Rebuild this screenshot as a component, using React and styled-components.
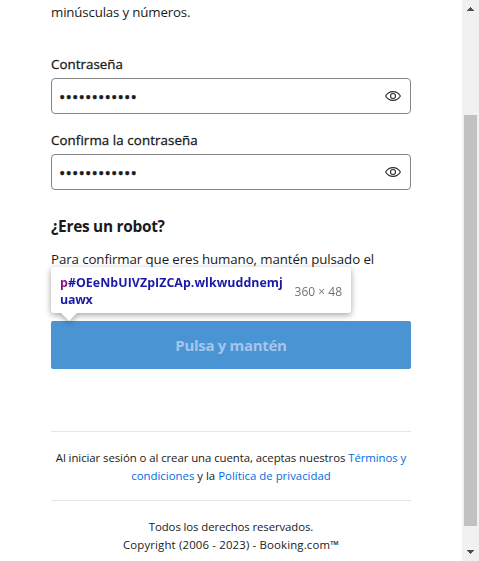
import React from 'react';
import styled, { createGlobalStyle } from 'styled-components';

const GlobalStyle = createGlobalStyle`
  *, *::before, *::after { box-sizing: border-box; }
  body {
    margin: 0;
    background: #fff;
    overflow: hidden;
    color: #1a1a1a;
    font-family: "Open Sans", "Noto Sans", sans-serif;
  }
`;

const Window = styled.div`
  display: flex;
  width: 479px;
  height: 561px;
  overflow: hidden;
`;

const Page = styled.main`
  display: flex;
  flex-direction: column;
  width: 462px;
  padding: 2px 51px 0;
`;

const Track = styled.span`
  letter-spacing: ${({ $by }) => $by}px;
`;

const BodyText = styled.p`
  margin: 0;
  font-size: 13.3px;
  line-height: 20px;
  white-space: nowrap;
`;

const Fields = styled.div`
  display: flex;
  flex-direction: column;
  gap: 16px;
  margin-top: 32px;
`;

const Field = styled.label`
  display: flex;
  flex-direction: column;
  gap: 4px;
`;

const Label = styled.span`
  font-size: 13.3px;
  font-weight: 500;
  line-height: 20px;
  -webkit-text-stroke: 0.3px currentColor;
`;

const InputBox = styled.span`
  display: flex;
  align-items: center;
  justify-content: space-between;
  height: 36px;
  padding: 0 9px 0 7px;
  border: 1px solid #868686;
  border-radius: 4px;
`;

const Secret = styled.span`
  padding-top: 2px;
  font-size: 17px;
  line-height: 32px;
  letter-spacing: 0.1px;
  -webkit-text-stroke: 0.4px currentColor;
`;

const EyeIcon = styled.svg`
  width: 16px;
  height: 16px;
  fill: none;
  stroke: #2b2b2b;
  stroke-width: 1.1;
`;

const Heading = styled.h2`
  margin: 25px 0 10px;
  font-size: 15.4px;
  font-weight: 700;
  line-height: 24px;
`;

const Challenge = styled.div`
  position: relative;
  margin-top: 52px;
`;

const HoldButton = styled.button`
  display: block;
  width: 360px;
  height: 48px;
  padding: 1px 0 0;
  border: 0;
  border-radius: 2px;
  background: #4a94d4;
  color: #a4c6ec;
  font: 700 15px/47px "Open Sans", sans-serif;
`;

const Tooltip = styled.div`
  position: absolute;
  left: 0;
  top: -54px;
  display: flex;
  align-items: center;
  justify-content: space-between;
  width: 300px;
  height: 46px;
  padding: 7px 9px 5px;
  border-radius: 3px;
  background: #fff;
  font-size: 12.4px;
  line-height: 17px;
  filter: drop-shadow(0 2px 3px rgba(0, 0, 0, 0.36));

  &::after {
    content: "";
    position: absolute;
    left: 10px;
    top: 46px;
    border: 8px solid transparent;
    border-top-color: #fff;
    border-bottom: 0;
  }
`;

const Selector = styled.span`
  font-weight: 700;
  color: #1a1aa6;
  white-space: nowrap;
`;

const TagName = styled.span`
  color: #881280;
`;

const Dimensions = styled.span`
  font-size: 12px;
  color: #737373;
`;

const Legal = styled.footer`
  margin-top: 62px;
`;

const LegalBlock = styled.div`
  height: 69px;
  padding-top: 17px;
  border-top: 1px solid #e6e6e6;
  font-size: 11.4px;
  line-height: 18px;
  text-align: center;
  white-space: nowrap;
`;

const Link = styled.a`
  color: #006ce4;
`;

const Scrollbar = styled.div`
  display: flex;
  flex-direction: column;
  align-items: center;
  width: 17px;
  height: 561px;
  padding-top: 7px;
  background: #f1f1f1;
`;

const Arrow = styled.svg`
  width: 7px;
  height: 4px;
  fill: #505050;
  shape-rendering: crispEdges;
`;

const Thumb = styled.div`
  width: 13px;
  height: 411px;
  margin: 104px 0 24px;
  background: #c1c1c1;
`;

function PasswordField({ label, tracking }) {
  return (
    <Field>
      <Label><Track $by={tracking}>{label}</Track></Label>
      <InputBox>
        <Secret>••••••••••••</Secret>
        <EyeIcon viewBox="0 0 16 16">
          <path d="M.6 8C2.3 5.1 4.8 3.6 8 3.6s5.7 1.5 7.4 4.4c-1.7 2.9-4.2 4.4-7.4 4.4S2.3 10.9.6 8Z" />
          <circle cx="8" cy="8" r="2.5" />
        </EyeIcon>
      </InputBox>
    </Field>
  );
}

export default function App() {
  return (
    <Window>
      <GlobalStyle />
      <Page>
        <BodyText><Track $by={-0.17}>minúsculas y números.</Track></BodyText>
        <Fields>
          <PasswordField label="Contraseña" tracking={0.05} />
          <PasswordField label="Confirma la contraseña" tracking={0.1} />
        </Fields>
        <Heading><Track $by={-0.27}>¿Eres un robot?</Track></Heading>
        <BodyText><Track $by={-0.1}>Para confirmar que eres humano, mantén pulsado el</Track></BodyText>
        <Challenge>
          <HoldButton type="button"><Track $by={-0.3}>Pulsa y mantén</Track></HoldButton>
          <Tooltip>
            <Selector>
              <Track $by={0.05}><TagName>p</TagName>#OEeNbUIVZpIZCAp.wlkwuddnemj</Track>
              <br />
              <Track $by={-0.25}>uawx</Track>
            </Selector>
            <Dimensions>360 × 48</Dimensions>
          </Tooltip>
        </Challenge>
        <Legal>
          <LegalBlock>
            <Track $by={-0.07}>Al iniciar sesión o al crear una cuenta, aceptas nuestros <Link>Términos y</Link></Track>
            <br />
            <Track $by={0}><Link>condiciones</Link> y la <Link>Política de privacidad</Link></Track>
          </LegalBlock>
          <LegalBlock>
            <Track $by={-0.1}>Todos los derechos reservados.</Track>
            <br />
            <Track $by={0.16}>Copyright (2006 - 2023) - Booking.com™</Track>
          </LegalBlock>
        </Legal>
      </Page>
      <Scrollbar>
        <Arrow viewBox="0 0 7 4"><path d="M3 0h1v1h1v1h1v1h1v1H0V3h1V2h1V1h1z" /></Arrow>
        <Thumb />
        <Arrow viewBox="0 0 7 4"><path d="M0 0h7v1H6v1H5v1H4v1H3V3H2V2H1V1H0z" /></Arrow>
      </Scrollbar>
    </Window>
  );
}
